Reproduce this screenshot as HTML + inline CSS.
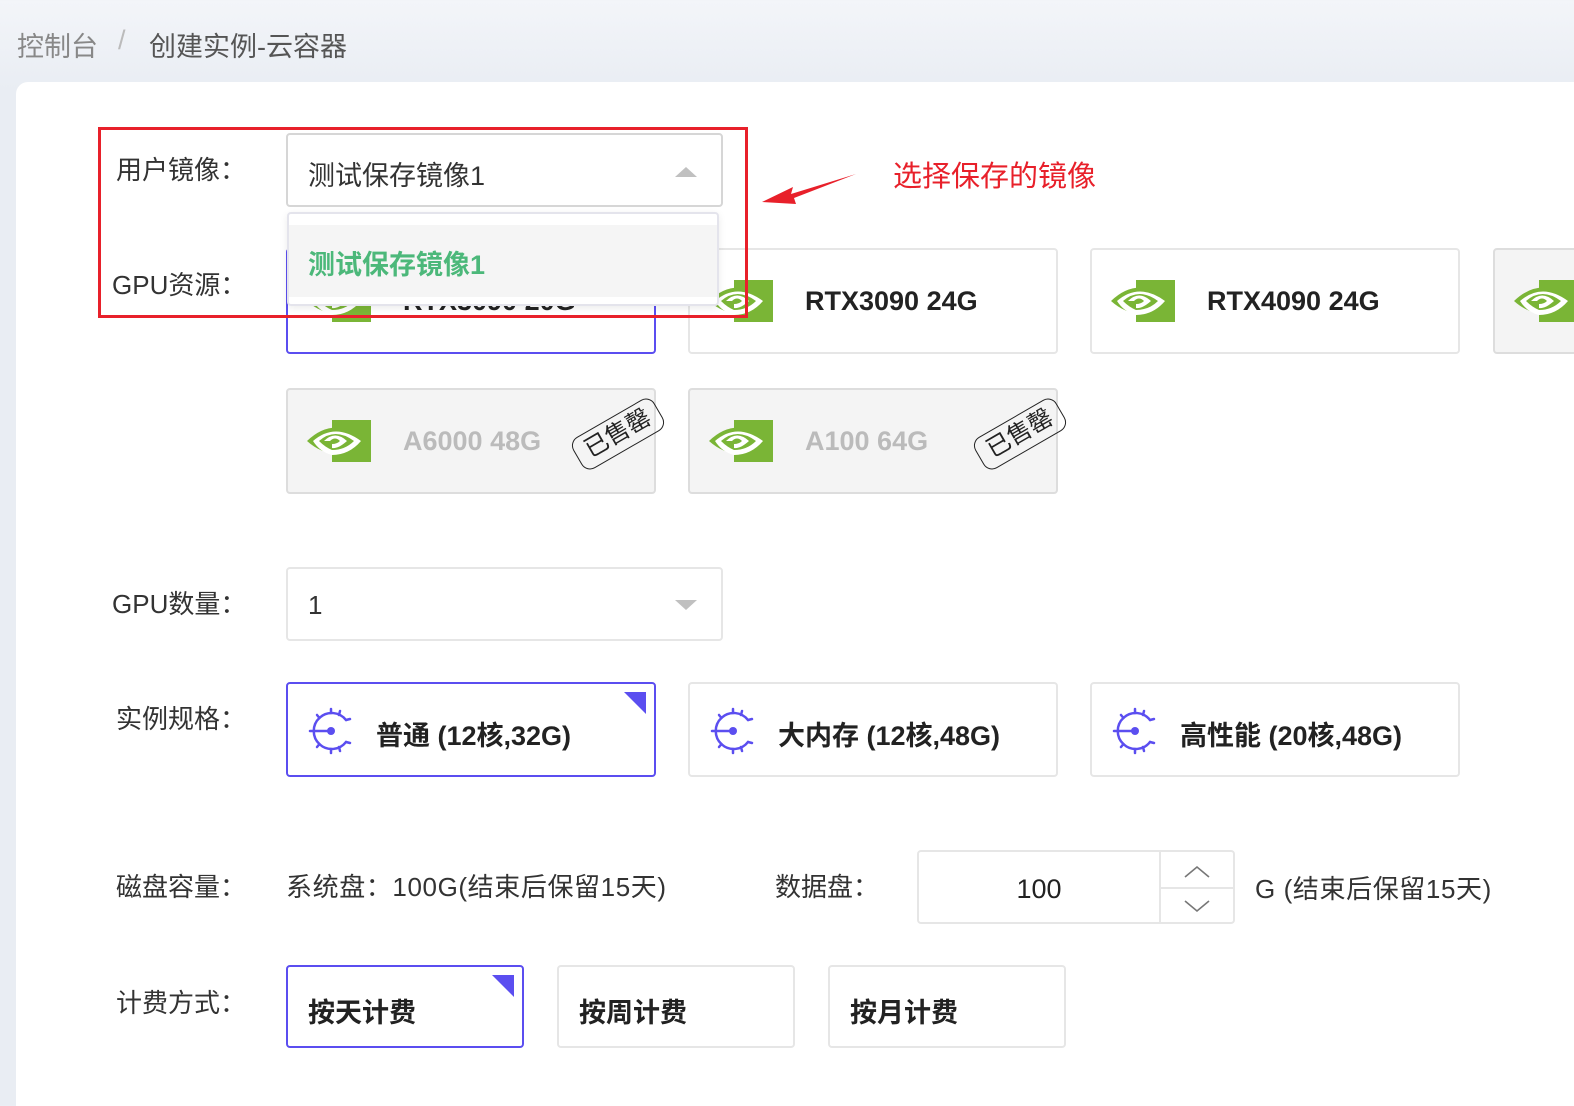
<!DOCTYPE html>
<html style="overflow:hidden;height:1106px"><head><meta charset="utf-8">
<style>
*{margin:0;padding:0;box-sizing:border-box}
body{width:1574px;height:1106px;overflow:hidden;background:linear-gradient(#f3f5f9,#e9edf3 90px);font-family:"Liberation Sans","Noto Sans CJK SC",sans-serif;position:relative}
.a{position:absolute}
.card{left:16px;top:82px;width:1558px;height:1024px;background:#fff;border-radius:12px 0 0 0}
.lbl{font-size:26px;color:#333;line-height:30px}
.box{position:absolute;border:2px solid #e6e6e6;border-radius:4px;background:#fff}
.sel{border-color:#5b4ef0}
.gpu{width:370px;height:106px}
.gpu .nm{position:absolute;left:115px;top:36px;font-size:27px;font-weight:bold;color:#222}
.gpu svg.nv{position:absolute;left:19px;top:30px}
.dis{background:#f4f4f4;border-color:#ddd}
.dis .nm{color:#bbb}
.stamp{position:absolute;width:94px;height:36px;border:1.5px solid #222;border-radius:10px;transform:rotate(-30deg);font-size:24px;line-height:33px;text-align:center;color:#222}
.corner{position:absolute;right:8px;top:8px;width:0;height:0;border-top:22px solid #5b4ef0;border-left:22px solid transparent}
.spec{width:370px;height:95px}
.spec .nm{position:absolute;left:88px;top:30px;font-size:27px;font-weight:bold;color:#222}
.spec svg{position:absolute;left:19px;top:23px}
.pay{width:238px;height:83px;top:965px}
.pay .nm{position:absolute;left:20px;top:24px;font-size:27px;font-weight:bold;color:#222}
</style></head><body>
<div class="a" style="left:17px;top:25px;font-size:27px;color:#888">控制台</div>
<div class="a" style="left:118px;top:25px;font-size:27px;color:#bbb">/</div>
<div class="a" style="left:149px;top:25px;font-size:27px;color:#555">创建实例-云容器</div>
<div class="a card"></div>

<svg width="0" height="0" style="position:absolute"><defs>
<symbol id="nv" viewBox="0 0 64 42">
<rect x="25" y="0" width="39" height="42" fill="#7ab536"/>
<path d="M0 21 Q28 -6 62 21 Q28 46 0 21Z" fill="#7ab536"/>
<path d="M6 21 Q28 2 54 21 Q42 35 25 35 L25 30 Q38 30 47 21 Q28 7 12 21 Q18 27 25 30 L25 35 Q13 32 6 21Z" fill="#fff"/>
<path d="M17 21 Q28 10 40 21 Q31 29 25 28 L25 24 Q30 24 33 21 Q28 16 23 21 Z" fill="#fff"/>
</symbol>
<symbol id="cpu" viewBox="0 0 48 48">
<g fill="none" stroke="#5b4ef0" stroke-width="2.5" stroke-linecap="round">
<path d="M39 13 A18 18 0 1 0 39 35"/>
<path d="M6 24 H22"/>
<path d="M24 2 V6 M10 8 L12.5 11 M3 24 H5 M10 40 L12.5 37 M24 46 V42 M39 13 L43 12 M39 35 L43 36 M33 4 L32 8 M33 44 L32 40"/>
</g><circle cx="24" cy="24" r="4" fill="#5b4ef0"/>
</symbol></defs></svg>

<div class="a lbl" style="left:116px;top:155px">用户镜像：</div>
<div class="a lbl" style="left:112px;top:270px">GPU资源：</div>

<div class="box gpu sel" style="left:286px;top:248px"><svg class="nv" width="64" height="42"><use href="#nv"/></svg><div class="nm">RTX3090 20G</div></div>
<div class="box gpu" style="left:688px;top:248px"><svg class="nv" width="64" height="42"><use href="#nv"/></svg><div class="nm">RTX3090 24G</div></div>
<div class="box gpu" style="left:1090px;top:248px"><svg class="nv" width="64" height="42"><use href="#nv"/></svg><div class="nm">RTX4090 24G</div></div>
<div class="box gpu dis" style="left:1493px;top:248px"><svg class="nv" width="64" height="42"><use href="#nv"/></svg></div>
<div class="box gpu dis" style="left:286px;top:388px"><svg class="nv" width="64" height="42"><use href="#nv"/></svg><div class="nm">A6000 48G</div><div class="stamp" style="left:283px;top:26px">已售罄</div></div>
<div class="box gpu dis" style="left:688px;top:388px"><svg class="nv" width="64" height="42"><use href="#nv"/></svg><div class="nm">A100 64G</div><div class="stamp" style="left:283px;top:26px">已售罄</div></div>

<div class="box" style="left:286px;top:133px;width:437px;height:74px;border-color:#d6d6d6"><div class="a" style="left:20px;top:19px;font-size:27px;color:#333">测试保存镜像1</div><div class="a" style="left:387px;top:32px;border-left:11px solid transparent;border-right:11px solid transparent;border-bottom:10px solid #c0c0c0"></div></div>
<div class="box" style="left:287px;top:212px;width:432px;height:94px;border-color:#e4e4ec;box-shadow:0 2px 8px rgba(0,0,0,.08)"><div class="a" style="left:0;top:11px;width:428px;height:72px;background:#f5f5f5"></div><div class="a" style="left:19px;top:29px;font-size:27px;font-weight:bold;color:#4cb87a">测试保存镜像1</div></div>

<div class="a" style="left:98px;top:127px;width:650px;height:191px;border:3px solid #e8202a"></div>
<svg class="a" style="left:755px;top:165px" width="110" height="45"><path d="M101 9 L36 29 L38 22 L7 37 L41 39 L39 33 Z" fill="#e8202a"/></svg>
<div class="a" style="left:893px;top:153px;font-size:29px;color:#e8202a">选择保存的镜像</div>

<div class="a lbl" style="left:112px;top:589px">GPU数量：</div>
<div class="box" style="left:286px;top:567px;width:437px;height:74px"><div class="a" style="left:20px;top:21px;font-size:26px;color:#333">1</div><div class="a" style="left:387px;top:31px;border-left:11px solid transparent;border-right:11px solid transparent;border-top:10px solid #c0c0c0"></div></div>

<div class="a lbl" style="left:116px;top:704px">实例规格：</div>
<div class="box spec sel" style="left:286px;top:682px"><svg width="48" height="48"><use href="#cpu"/></svg><div class="nm">普通 (12核,32G)</div><div class="corner"></div></div>
<div class="box spec" style="left:688px;top:682px"><svg width="48" height="48"><use href="#cpu"/></svg><div class="nm">大内存 (12核,48G)</div></div>
<div class="box spec" style="left:1090px;top:682px"><svg width="48" height="48"><use href="#cpu"/></svg><div class="nm">高性能 (20核,48G)</div></div>

<div class="a lbl" style="left:116px;top:872px">磁盘容量：</div>
<div class="a lbl" style="left:286px;top:872px;letter-spacing:0.6px">系统盘：100G(结束后保留15天)</div>
<div class="a lbl" style="left:775px;top:872px">数据盘：</div>
<div class="box" style="left:917px;top:850px;width:318px;height:74px"><div class="a" style="left:0;top:22px;width:240px;text-align:center;font-size:27px;color:#222">100</div><div class="a" style="left:240px;top:0;width:2px;height:70px;background:#e6e6e6"></div><div class="a" style="left:242px;top:35px;width:74px;height:2px;background:#e6e6e6"></div>
<svg class="a" style="left:264px;top:12px" width="28" height="16"><path d="M2 13 L14 3 L26 13" fill="none" stroke="#777" stroke-width="1.6"/></svg>
<svg class="a" style="left:264px;top:46px" width="28" height="16"><path d="M2 3 L14 13 L26 3" fill="none" stroke="#777" stroke-width="1.6"/></svg></div>
<div class="a lbl" style="left:1255px;top:874px;letter-spacing:0.6px">G (结束后保留15天)</div>

<div class="a lbl" style="left:116px;top:988px">计费方式：</div>
<div class="box pay sel" style="left:286px"><div class="nm">按天计费</div><div class="corner"></div></div>
<div class="box pay" style="left:557px"><div class="nm">按周计费</div></div>
<div class="box pay" style="left:828px"><div class="nm">按月计费</div></div>
</body></html>
